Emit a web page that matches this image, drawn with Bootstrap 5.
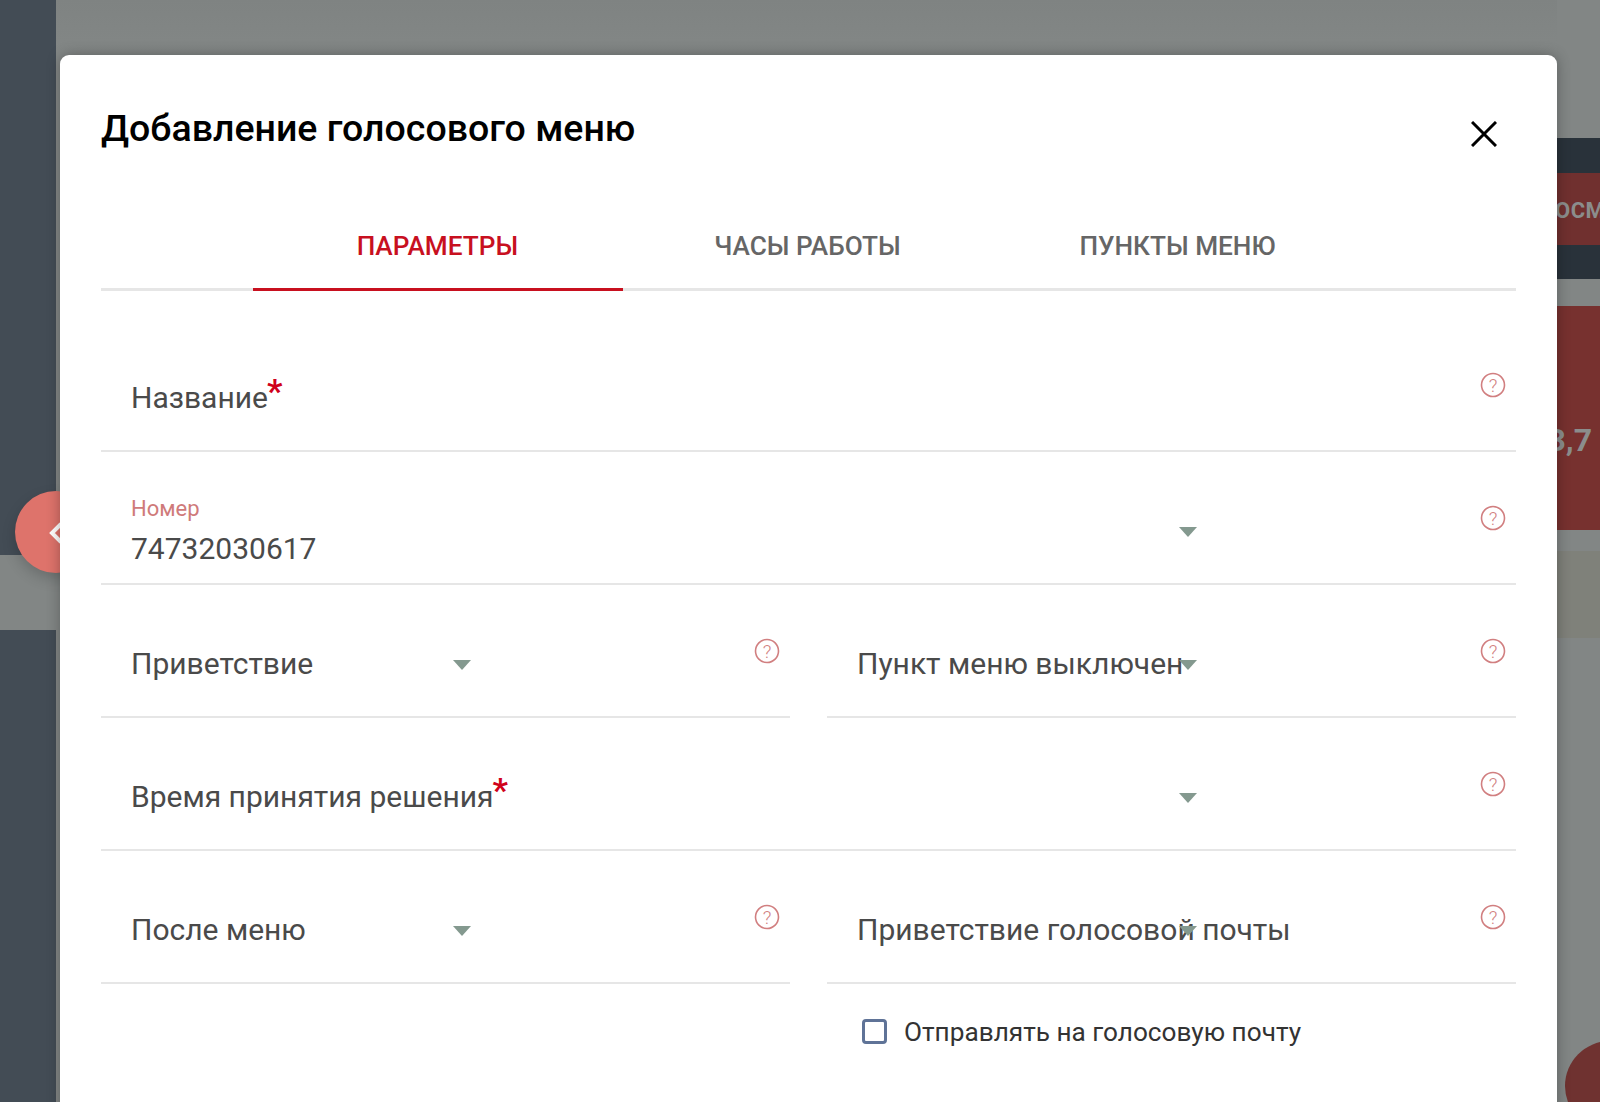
<!DOCTYPE html>
<html lang="ru">
<head>
<meta charset="utf-8">
<title>Добавление голосового меню</title>
<link href="https://cdn.jsdelivr.net/npm/bootstrap@5.3.0/dist/css/bootstrap.min.css" rel="stylesheet">
<style>
html,body{height:1102px;overflow:hidden;background:#828685;font-family:Roboto,"Liberation Sans",sans-serif}
.stage{position:relative;width:1600px;height:1102px;overflow:hidden}
.back{height:1102px}
.side{width:56px;background:#434c55}
.side-top{height:555px}
.side-gap{height:75px;background:#828685}
.side-bot{height:472px}
.back-main{background:linear-gradient(#7f8382,#838786 55px)}
.strip{width:43px;font-weight:700;color:#8b8d8c;overflow:hidden;white-space:nowrap}
.s0{height:138px}
.s1{height:35px;background:#29323a}
.s2{height:72px;background:#70302f;font-size:22px;letter-spacing:.5px;line-height:76px;text-indent:-2px}
.s3{height:34px;background:#29323a}
.s4{height:27px}
.s5{height:224px;background:#77312f;font-size:32px;padding:116px 8px 0 0;line-height:36px}
.s6{height:21px}
.s7{height:87px;background:#7f817a}
.s8{flex:1}
.fab{position:absolute;left:15px;top:491px;width:82px;height:82px;border-radius:50%;background:#de736b;box-shadow:0 6px 14px rgba(0,0,0,.18)}
.fab svg{position:absolute;left:33px;top:30px}
.fab2{position:absolute;left:1565px;top:1041px;width:90px;height:90px;border-radius:50%;background:#6f3230}
.dialog{position:absolute;left:60px;top:55px;width:1497px;height:1100px;border:0;border-radius:9px;padding:0 41px;background:#fff;box-shadow:0 0 14px rgba(0,0,0,.3)}
.dlg-title{font-size:37.5px;font-weight:500;color:#000;line-height:44px;margin:0;padding-top:51px}
.dlg-close{padding:0;border:0;background:none;margin:66px 19px 0 0;height:26px;line-height:0}
.dlg-tabs{margin-top:66px;height:75px;padding-right:2px;border-bottom:3px solid #e6e6e6;flex-wrap:nowrap}
.dlg-tabs .nav-link{width:370px;height:75px;padding:0;line-height:61px;text-align:center;font-size:26.2px;font-weight:500;color:#666;border-radius:0;border-bottom:3px solid transparent}
.dlg-tabs .nav-link.active{color:#c8101f;background:none;border-bottom-color:#c8101f}
.form-area{padding-top:28px;--bs-gutter-x:37px}
.fld{position:relative;height:133px;border-bottom:2px solid #e6e6e6;padding:0 0 34px 30px;font-size:30px;line-height:36px;color:#4a4a4a}
.fld.has-top{padding-bottom:16px}
.fld-val{white-space:nowrap}
.fld-top{color:#cf7a7a;font-size:22px;line-height:26px;margin-bottom:9px}
.req{color:#d0021b;font-size:34px;font-weight:700;line-height:0;position:relative;top:-5px;margin-left:-1px}
.caret-x{position:absolute;top:75px;left:352px;width:0;height:0;border-left:9.5px solid transparent;border-right:9.5px solid transparent;border-top:10px solid #84998f}
.wide .caret-x{left:1078px}
.hlp{position:absolute;right:10px;top:53px}
.hlp text{font-size:19px;font-weight:300;fill:#d17f80;font-family:Roboto,sans-serif}
.chk{padding:32px 0 0 35px;margin:0;min-height:0;font-size:26.2px;line-height:32px;color:#333}
.chk .form-check-input{width:25px;height:25px;margin:3px 17px 0 0;float:none;flex:none;border:3px solid #5f7397;border-radius:4px}
.chk .form-check-label{white-space:nowrap}
</style>
</head>
<body>
<div class="stage">
  <div class="back d-flex">
    <div class="side d-flex flex-column flex-shrink-0">
      <div class="side-top"></div><div class="side-gap"></div><div class="side-bot flex-grow-1"></div>
    </div>
    <div class="back-main flex-grow-1"></div>
    <div class="strip d-flex flex-column flex-shrink-0">
      <div class="s0"></div><div class="s1"></div><div class="s2">ОСМО</div><div class="s3"></div><div class="s4"></div><div class="s5 d-flex justify-content-end">3,7</div><div class="s6"></div><div class="s7"></div><div class="s8"></div>
    </div>
  </div>
  <div class="fab"><svg width="16" height="24" viewBox="0 0 16 24"><path d="M13 3 4 12l9 9" fill="none" stroke="#fff" stroke-width="4"/></svg></div>
  <div class="fab2"></div>

  <div class="modal-content dialog">
    <div class="d-flex justify-content-between align-items-start">
      <h5 class="dlg-title">Добавление голосового меню</h5>
      <button type="button" class="dlg-close" aria-label="Закрыть"><svg width="26" height="26" viewBox="0 0 26 26"><path d="M1 1l24 24M25 1 1 25" stroke="#000" stroke-width="3" fill="none"/></svg></button>
    </div>
    <ul class="nav dlg-tabs justify-content-center">
      <li class="nav-item"><a class="nav-link active" href="#">ПАРАМЕТРЫ</a></li>
      <li class="nav-item"><a class="nav-link" href="#">ЧАСЫ РАБОТЫ</a></li>
      <li class="nav-item"><a class="nav-link" href="#">ПУНКТЫ МЕНЮ</a></li>
    </ul>
    <div class="form-area row">
      <div class="col-12">
        <div class="fld wide d-flex flex-column justify-content-end">
          <div class="fld-val">Название<span class="req">*</span></div>
          <svg class="hlp" width="26" height="26" viewBox="0 0 26 26"><circle cx="13" cy="13" r="11.5" fill="none" stroke="#d17f80" stroke-width="1.6"/><text x="13" y="19.5" text-anchor="middle">?</text></svg>
        </div>
      </div>
      <div class="col-12">
        <div class="fld wide has-top d-flex flex-column justify-content-end">
          <div class="fld-top">Номер</div>
          <div class="fld-val">74732030617</div>
          <span class="caret-x"></span>
          <svg class="hlp" width="26" height="26" viewBox="0 0 26 26"><circle cx="13" cy="13" r="11.5" fill="none" stroke="#d17f80" stroke-width="1.6"/><text x="13" y="19.5" text-anchor="middle">?</text></svg>
        </div>
      </div>
      <div class="col-6">
        <div class="fld d-flex flex-column justify-content-end">
          <div class="fld-val">Приветствие</div>
          <span class="caret-x"></span>
          <svg class="hlp" width="26" height="26" viewBox="0 0 26 26"><circle cx="13" cy="13" r="11.5" fill="none" stroke="#d17f80" stroke-width="1.6"/><text x="13" y="19.5" text-anchor="middle">?</text></svg>
        </div>
      </div>
      <div class="col-6">
        <div class="fld d-flex flex-column justify-content-end">
          <div class="fld-val">Пункт меню выключен</div>
          <span class="caret-x"></span>
          <svg class="hlp" width="26" height="26" viewBox="0 0 26 26"><circle cx="13" cy="13" r="11.5" fill="none" stroke="#d17f80" stroke-width="1.6"/><text x="13" y="19.5" text-anchor="middle">?</text></svg>
        </div>
      </div>
      <div class="col-12">
        <div class="fld wide d-flex flex-column justify-content-end">
          <div class="fld-val">Время принятия решения<span class="req">*</span></div>
          <span class="caret-x"></span>
          <svg class="hlp" width="26" height="26" viewBox="0 0 26 26"><circle cx="13" cy="13" r="11.5" fill="none" stroke="#d17f80" stroke-width="1.6"/><text x="13" y="19.5" text-anchor="middle">?</text></svg>
        </div>
      </div>
      <div class="col-6">
        <div class="fld d-flex flex-column justify-content-end">
          <div class="fld-val">После меню</div>
          <span class="caret-x"></span>
          <svg class="hlp" width="26" height="26" viewBox="0 0 26 26"><circle cx="13" cy="13" r="11.5" fill="none" stroke="#d17f80" stroke-width="1.6"/><text x="13" y="19.5" text-anchor="middle">?</text></svg>
        </div>
      </div>
      <div class="col-6">
        <div class="fld d-flex flex-column justify-content-end">
          <div class="fld-val">Приветствие голосовой почты</div>
          <span class="caret-x"></span>
          <svg class="hlp" width="26" height="26" viewBox="0 0 26 26"><circle cx="13" cy="13" r="11.5" fill="none" stroke="#d17f80" stroke-width="1.6"/><text x="13" y="19.5" text-anchor="middle">?</text></svg>
        </div>
        <div class="form-check chk d-flex align-items-start">
          <input class="form-check-input" type="checkbox" id="vm">
          <label class="form-check-label" for="vm">Отправлять на голосовую почту</label>
        </div>
      </div>
    </div>
  </div>
</div>
<script src="https://cdn.jsdelivr.net/npm/bootstrap@5.3.0/dist/js/bootstrap.bundle.min.js"></script>
</body>
</html>
